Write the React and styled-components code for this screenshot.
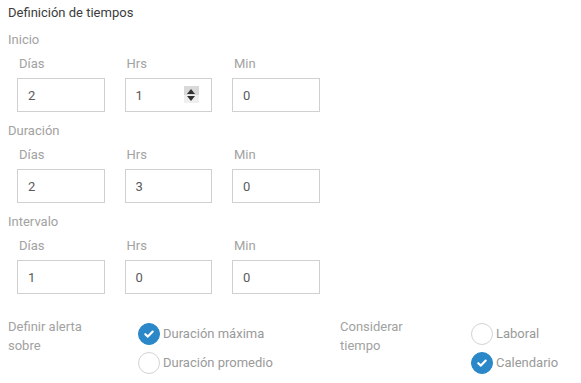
import React from 'react';
import styled, { createGlobalStyle } from 'styled-components';

const sections = [
    { name: 'Inicio', values: ['2', '1', '0'], spin: 1 },
    { name: 'Duración', values: ['2', '3', '0'] },
    { name: 'Intervalo', values: ['1', '0', '0'] },
];
const units = ['Días', 'Hrs', 'Min'];

export default function App () {
    return (
        <Page>
            <GlobalStyle />
            <Title>Definición de tiempos</Title>
            {sections.map((s, i) => (
                <Section key={s.name} first={i === 0}>
                    <SectionLabel>{s.name}</SectionLabel>
                    <Fields>
                        {s.values.map((v, j) => (
                            <Field key={j}>
                                <FieldLabel>{units[j]}</FieldLabel>
                                <Box>
                                    {v}
                                    {s.spin === j && <Spinner><Up /><Down /></Spinner>}
                                </Box>
                            </Field>
                        ))}
                    </Fields>
                </Section>
            ))}
            <Options>
                <OptLabel>Definir alerta<br />sobre</OptLabel>
                <RadioList>
                    <Radio checked text="Duración máxima" />
                    <Radio text="Duración promedio" />
                </RadioList>
                <OptLabel>Considerar<br />tiempo</OptLabel>
                <RadioList>
                    <Radio text="Laboral" />
                    <Radio checked text="Calendario" />
                </RadioList>
            </Options>
        </Page>
    )
}

function Radio ({ checked, text }) {
    return (
        <RadioRow>
            <Circle checked={checked}>
                {checked && (
                    <svg width="12" height="12" viewBox="0 0 12 12">
                        <path d="M2.3 6.2 L4.9 8.6 L9.7 3.6" fill="none" stroke="#fff" strokeWidth="2.2" strokeLinecap="round" strokeLinejoin="round" />
                    </svg>
                )}
            </Circle>
            <span>{text}</span>
        </RadioRow>
    )
}

//styled components

const GlobalStyle = createGlobalStyle`
    body {
        margin: 0;
        background: #fff;
        font-family: Roboto, "Liberation Sans", Arial, sans-serif;
    }
`

const Page = styled.div`
    width: 581px;
    height: 383px;
    padding: 4px 0 0 8px;
    box-sizing: border-box;
    font-size: 13px;
`

const Title = styled.div`
    color: #3c3c3c;
    line-height: 18px;
`

const Section = styled.div`
    margin-top: ${props => props.first ? '9px' : '10px'};
`

const SectionLabel = styled.div`
    color: #a2a2a2;
    line-height: 18px;
`

const Fields = styled.div`
    display: flex;
    gap: 20px;
    padding-left: 9px;
    margin-top: 6px;
`

const Field = styled.div`
    display: flex;
    flex-direction: column;
    gap: 5px;
`

const FieldLabel = styled.div`
    color: #a2a2a2;
    line-height: 18px;
    padding-left: 2px;
`

const Box = styled.div`
    position: relative;
    width: 87.5px;
    height: 34px;
    box-sizing: border-box;
    border: 1px solid #d0d0d0;
    padding-left: 10px;
    display: flex;
    align-items: center;
    color: #5a5a5a;
`

const Spinner = styled.span`
    position: absolute;
    left: 58px;
    top: 7px;
    width: 15px;
    height: 17px;
    display: flex;
    flex-direction: column;
`

const Up = styled.span`
    flex: 1;
    background: #d9d9d9;
    position: relative;
    &::after {
        content: '';
        position: absolute;
        left: 3px;
        bottom: 1px;
        border-left: 4.5px solid transparent;
        border-right: 4.5px solid transparent;
        border-bottom: 5px solid #333;
    }
`

const Down = styled.span`
    flex: 1;
    background: #efefef;
    position: relative;
    &::after {
        content: '';
        position: absolute;
        left: 3px;
        top: 1px;
        border-left: 4.5px solid transparent;
        border-right: 4.5px solid transparent;
        border-top: 5px solid #333;
    }
`

const Options = styled.div`
    display: grid;
    grid-template-columns: 130px 202px 131px auto;
    margin-top: 23px;
`

const OptLabel = styled.div`
    color: #a2a2a2;
    line-height: 19px;
`

const RadioList = styled.div`
    display: flex;
    flex-direction: column;
    gap: 7px;
    padding-top: 6px;
`

const RadioRow = styled.div`
    display: flex;
    align-items: center;
    gap: 3px;
    color: #9a9a9a;
    line-height: 18px;
`

const Circle = styled.span`
    width: 22px;
    height: 22px;
    box-sizing: border-box;
    border-radius: 50%;
    border: 1px solid ${props => props.checked ? '#2a87c8' : '#d6d3cf'};
    background: ${props => props.checked ? '#2a87c8' : '#fff'};
    display: flex;
    align-items: center;
    justify-content: center;
`
